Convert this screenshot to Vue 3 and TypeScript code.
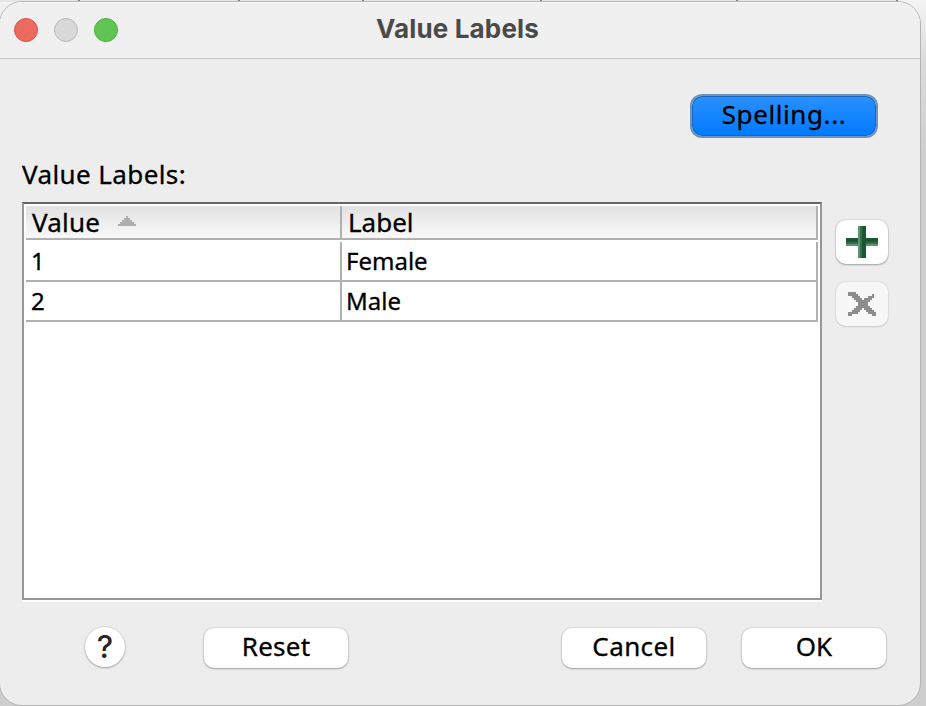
<script setup lang="ts">
interface Entry {
  value: string
  label: string
}

const entries: Entry[] = [
  { value: '1', label: 'Female' },
  { value: '2', label: 'Male' },
]
</script>

<template>
  <div class="desktop">
    <div class="gridline"><i v-for="n in 6" :key="n" :class="'tick tick-' + n"></i></div>
    <main class="window">
      <header class="titlebar">
        <div class="lights">
          <span class="light red"></span>
          <span class="light gray"></span>
          <span class="light green"></span>
        </div>
        <h1 class="title">Value Labels</h1>
      </header>

      <div class="top-row">
        <button class="btn primary"><span class="t-spelling">Spelling...</span></button>
      </div>

      <div class="caption"><span class="t-caption">Value Labels:</span></div>

      <section class="middle">
        <div class="panel">
          <div class="row head">
            <div class="cell first">
              <span class="t-value">Value</span>
              <svg class="sort" width="18" height="10" viewBox="0 0 9 5" shape-rendering="crispEdges">
                <path d="M4 0h1v1h1v1h1v1h1v1h1v1H0V4h1V3h1V2h1V1h1z" fill="#aeaeae" />
              </svg>
            </div>
            <div class="cell second"><span>Label</span></div>
          </div>
          <div v-for="e in entries" :key="e.value" class="row">
            <div class="cell first"><span>{{ e.value }}</span></div>
            <div class="cell second"><span>{{ e.label }}</span></div>
          </div>
        </div>
        <div class="tools">
          <button class="tool" aria-label="Add">
            <svg width="32" height="32" viewBox="0 0 16 16" shape-rendering="crispEdges">
              <path d="M0 6h16v2H0z" fill="#1d5632" />
              <path d="M0 8h16v1H0z" fill="#34704a" />
              <path d="M0 9h16v1H0z" fill="#5f9470" />
              <path d="M6 0h1v16H6z" fill="#5f9470" />
              <path d="M7 0h1v16H7z" fill="#34704a" />
              <path d="M8 0h2v16H8z" fill="#1d5632" />
            </svg>
          </button>
          <button class="tool disabled" aria-label="Remove">
            <svg width="28" height="24" viewBox="0 0 14 12" shape-rendering="crispEdges">
              <path
                d="M0 0h4v1H0zM0 1h5v1H0zM12 1h1v1h-1zM2 2h4v1H2zM10 2h3v1h-3zM3 3h4v1H3zM8 3h4v1H8zM4 4h7v1H4zM5 5h5v1H5zM5 6h5v1H5zM4 7h7v1H4zM3 8h4v1H3zM8 8h4v1H8zM2 9h4v1H2zM9 9h4v1H9zM0 10h5v1H0zM10 10h4v1h-4zM0 11h2v1H0zM12 11h2v1h-2z"
                fill="#8d8d8d"
              />
            </svg>
          </button>
        </div>
      </section>

      <footer class="footer">
        <button class="help"><span>?</span></button>
        <button class="btn reset"><span class="t-reset">Reset</span></button>
        <button class="btn cancel"><span class="t-cancel">Cancel</span></button>
        <button class="btn ok"><span class="t-ok">OK</span></button>
      </footer>
    </main>
  </div>
</template>

<style>
html,
body {
  margin: 0;
  overflow: hidden;
}
</style>

<style scoped>
* {
  box-sizing: border-box;
}
.desktop {
  position: relative;
  width: 926px;
  height: 706px;
  overflow: hidden;
  background: linear-gradient(#f4f4f4 0, #dcdcdc 60px, #cecece 160px, #cecece 100%);
  font-family: 'Noto Sans', 'Open Sans', sans-serif;
  color: #000;
  -webkit-text-stroke: 0.3px currentColor;
}
.gridline {
  position: absolute;
  inset: 0 0 auto 0;
  height: 2px;
  width: 898px;
  background: #e6e6e6;
}
.tick {
  position: absolute;
  top: 0;
  width: 2px;
  height: 2px;
  background: #848484;
}
.tick-1 { left: 78px; }
.tick-2 { left: 238px; }
.tick-3 { left: 362px; }
.tick-4 { left: 540px; }
.tick-5 { left: 736px; }
.tick-6 { left: 896px; }
.window {
  position: relative;
  display: flex;
  flex-direction: column;
  width: 922px;
  height: 705px;
  margin: 1px 0 0 -1px;
  border: 1px solid #b4b4b4;
  border-radius: 23px;
  background: #ededed;
  overflow: hidden;
}
.titlebar {
  display: flex;
  align-items: flex-start;
  flex: none;
  height: 57px;
  padding: 15px 0 0 14px;
  background: #f0f0f0;
  border-top: 1px solid #fafafa;
  border-bottom: 1px solid #c4c4c4;
}
.lights {
  display: flex;
  gap: 16px;
}
.light {
  width: 24px;
  height: 24px;
  border-radius: 50%;
  border: 1px solid;
}
.red { background: #ed6a5e; border-color: #d9544a; }
.gray { background: #d8d8d8; border-color: #b8b8b8; }
.green { background: #61c554; border-color: #4fae3f; }
.title {
  margin: -4px 0 0 258px;
  font: 700 26px/30px Inter, sans-serif;
  letter-spacing: 0.15px;
  color: #4a4a4a;
  white-space: nowrap;
  -webkit-text-stroke: 0;
}
.top-row {
  display: flex;
  justify-content: flex-end;
  flex: none;
  height: 95px;
  padding: 35px 42px 0 0;
}
button {
  display: flex;
  align-items: center;
  justify-content: center;
  padding: 0;
  border: 0;
  font-family: inherit;
  color: #000;
  white-space: nowrap;
}
.btn {
  width: 144px;
  height: 40px;
  padding-bottom: 4px;
  border-radius: 10px;
  background: #fff;
  box-shadow: 0 0 1px 1px rgba(0, 0, 0, 0.07), 0 1px 2px rgba(0, 0, 0, 0.28);
  font-size: 26px;
  line-height: 36px;
}
.primary {
  width: 188px;
  height: 44px;
  border: 2px solid #6f93bb;
  border-radius: 12px;
  background: linear-gradient(#2a90ff, #007aff) padding-box;
  box-shadow: inset 0 0 0 1px #1767bd;
}
.t-spelling { letter-spacing: 0.6px; }
.t-caption { letter-spacing: 0.4px; }
.t-value { letter-spacing: 0.2px; }
.t-reset { letter-spacing: 0.25px; }
.t-cancel { letter-spacing: 0.4px; }
.caption {
  flex: none;
  height: 48px;
  padding-left: 22px;
  font-size: 26px;
  line-height: 40px;
}
.middle {
  display: flex;
  flex: none;
  height: 398px;
}
.panel {
  width: 800px;
  height: 398px;
  margin-left: 22px;
  padding: 2px;
  border: 2px solid #979797;
  border-top-color: #666;
  background: #fff;
  box-shadow: 0 2px 0 #fff;
}
.row {
  display: flex;
  height: 40px;
  width: 792px;
  font-size: 24px;
  line-height: 38px;
}
.cell {
  border-right: 2px solid #b0b0b0;
  border-bottom: 2px solid #b0b0b0;
  white-space: nowrap;
}
.first {
  width: 316px;
  padding-left: 5px;
}
.second {
  width: 476px;
  padding-left: 4px;
}
.head {
  height: 34px;
  margin-bottom: 2px;
  font-size: 26px;
  line-height: 32px;
  background: linear-gradient(#e2e2e2, #fafafa);
}
.head .first {
  display: flex;
  padding-left: 6px;
}
.head .second {
  padding-left: 6px;
}
.sort {
  margin: 10px 0 0 18px;
}
.tools {
  display: flex;
  flex-direction: column;
  gap: 18px;
  padding: 18px 0 0 14px;
}
.tool {
  width: 52px;
  height: 44px;
  border-radius: 10px;
  background: #fff;
  box-shadow: 0 0 1px 1px rgba(0, 0, 0, 0.07), 0 1px 2px rgba(0, 0, 0, 0.28);
}
.disabled {
  background: #f7f7f7;
  box-shadow: 0 0 1px 1px rgba(0, 0, 0, 0.05), 0 1px 2px rgba(0, 0, 0, 0.1);
}
.footer {
  display: flex;
  align-items: flex-start;
  padding: 27px 0 0 85px;
}
.help {
  width: 40px;
  height: 40px;
  border-radius: 50%;
  background: #fff;
  box-shadow: 0 0 1px 1px rgba(0, 0, 0, 0.07), 0 1px 2px rgba(0, 0, 0, 0.28);
  font: 500 31px/40px Inter, sans-serif;
  color: #262626;
  -webkit-text-stroke: 0;
}
.reset { margin: 1px 0 0 79px; }
.cancel { margin: 1px 0 0 214px; }
.ok { margin: 1px 0 0 36px; }
</style>
